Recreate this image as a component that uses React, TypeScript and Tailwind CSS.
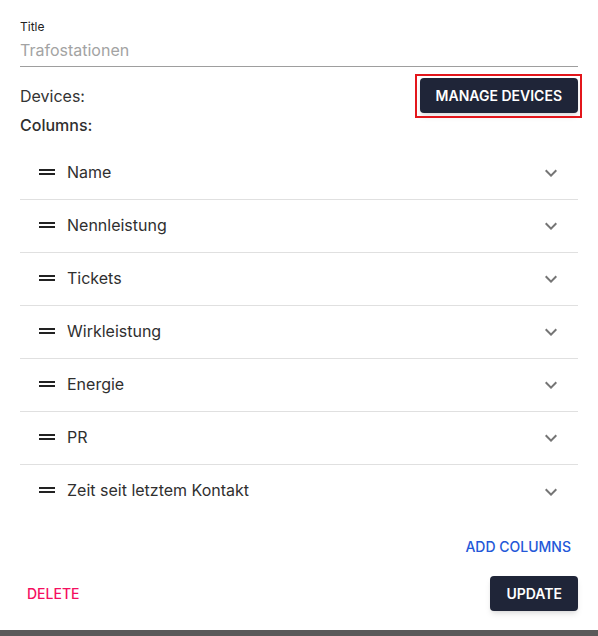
import React from "react";

const columns = [
    "Name",
    "Nennleistung",
    "Tickets",
    "Wirkleistung",
    "Energie",
    "PR",
    "Zeit seit letztem Kontakt"
];

const DragHandle = () => (
    <svg viewBox="0 0 24 24" className="h-6 w-6 shrink-0 fill-[#222]">
        <path d="M20 9H4v2h16V9zM4 15h16v-2H4v2z" />
    </svg>
);

const ExpandMore = () => (
    <svg viewBox="0 0 24 24" className="mt-[3px] h-6 w-6 shrink-0 fill-[#757575]">
        <path d="M16.59 8.59 12 13.17 7.41 8.59 6 10l6 6 6-6z" />
    </svg>
);

const ColumnRow = ({ label, last }: { label: string; last: boolean }) => (
    <div
        className={
            last
                ? "flex h-[53px] items-center pb-[3px] pl-[15px] pr-[15px]"
                : "flex h-[53px] items-center border-b border-[#e0e0e0] pb-[3px] pl-[15px] pr-[15px]"
        }
    >
        <DragHandle />
        <span className="ml-2 flex-1 text-base text-[#2f2f2f]">{label}</span>
        <ExpandMore />
    </div>
);

export default function App() {
    return (
        <div className="h-[636px] w-[598px] bg-[#5a5a5a] font-['Inter',sans-serif]">
            <div className="flex h-[630px] flex-col bg-white px-5 pt-[19px]">
                <label className="text-xs leading-4 text-[#222]">Title</label>
                <div className="mt-[3px] border-b border-[#9e9e9e] pb-[4px] text-base leading-6 text-[#a3a3a3]">
                    Trafostationen
                </div>

                <div className="mt-[11px] flex items-center justify-between">
                    <span className="text-base text-[#333]">Devices:</span>
                    <button className="relative h-[35px] rounded bg-[#1f2538] px-4 text-sm font-semibold text-white shadow-md">
                        MANAGE DEVICES
                        <span className="pointer-events-none absolute -top-[4px] -right-[4px] -bottom-[5px] -left-[5px] border-2 border-[#e3161b]" />
                    </button>
                </div>

                <div className="text-base font-medium leading-6 text-[#2f2f2f]">Columns:</div>

                <div className="mt-[10px] flex flex-col">
                    {columns.map((c, i) => (
                        <ColumnRow key={c} label={c} last={i === columns.length - 1} />
                    ))}
                </div>

                <div className="mt-[19px] flex justify-end">
                    <button className="px-[7px] text-sm font-medium text-[#2458d8]">ADD COLUMNS</button>
                </div>

                <div className="mt-[19px] flex items-center justify-between">
                    <button className="px-[7px] text-sm font-medium text-[#f50f5f]">DELETE</button>
                    <button className="h-[35px] rounded bg-[#1f2538] px-4 text-sm font-semibold text-white shadow-md">
                        UPDATE
                    </button>
                </div>
            </div>
        </div>
    );
}
